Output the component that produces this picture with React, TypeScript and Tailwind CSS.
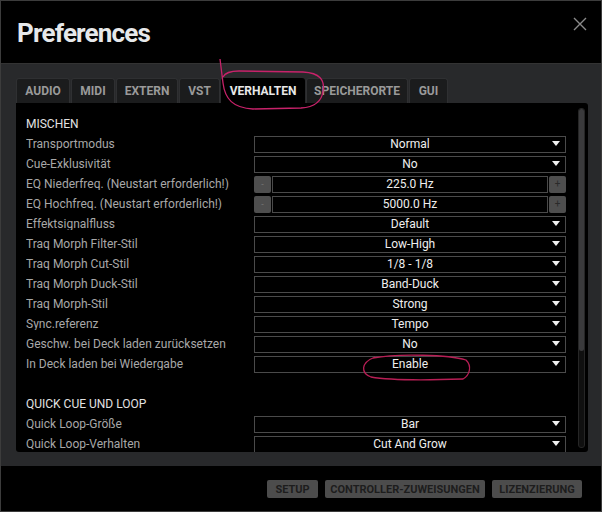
import React from "react";

const Arrow = () => (
  <svg width="8" height="5" viewBox="0 0 8 5" className="absolute right-[5px] top-[4px]">
    <polygon points="0,0 8,0 4,5" fill="#f0f0f0" />
  </svg>
);

type Row = { label: string; value: string; kind?: "select" | "stepper" };

const mischen: Row[] = [
  { label: "Transportmodus", value: "Normal" },
  { label: "Cue-Exklusivität", value: "No" },
  { label: "EQ Niederfreq. (Neustart erforderlich!)", value: "225.0 Hz", kind: "stepper" },
  { label: "EQ Hochfreq. (Neustart erforderlich!)", value: "5000.0 Hz", kind: "stepper" },
  { label: "Effektsignalfluss", value: "Default" },
  { label: "Traq Morph Filter-Stil", value: "Low-High" },
  { label: "Traq Morph Cut-Stil", value: "1/8 - 1/8" },
  { label: "Traq Morph Duck-Stil", value: "Band-Duck" },
  { label: "Traq Morph-Stil", value: "Strong" },
  { label: "Sync.referenz", value: "Tempo" },
  { label: "Geschw. bei Deck laden zurücksetzen", value: "No" },
  { label: "In Deck laden bei Wiedergabe", value: "Enable" },
];

const quick: Row[] = [
  { label: "Quick Loop-Größe", value: "Bar" },
  { label: "Quick Loop-Verhalten", value: "Cut And Grow" },
];

function SettingRow({ row }: { row: Row }) {
  return (
    <div className="flex items-center h-[20px]">
      <div className="w-[228px] text-[12px] text-[#a8a8a8] leading-none truncate">{row.label}</div>
      {row.kind === "stepper" ? (
        <div className="flex w-[312px] h-[17px] gap-px">
          <div className="w-[17px] h-full bg-[#4e4e4e] rounded-[2px] flex items-center justify-center text-[#777] text-[9px] leading-none">-</div>
          <div className="flex-1 h-full border border-[#4a4a4a] flex items-center justify-center text-[12px] text-[#eeeeee] leading-none">{row.value}</div>
          <div className="w-[17px] h-full bg-[#4e4e4e] rounded-[2px] flex items-center justify-center text-[#2a2a2a] text-[10px] leading-none">+</div>
        </div>
      ) : (
        <div className="relative w-[312px] h-[17px] border border-[#4a4a4a] flex items-center justify-center text-[12px] text-[#eeeeee] leading-none">
          {row.value}
          <Arrow />
        </div>
      )}
    </div>
  );
}

const tabs = ["AUDIO", "MIDI", "EXTERN", "VST", "VERHALTEN", "SPEICHERORTE", "GUI"];
const tabW = [54, 44, 62, 41, 84, 102, 39];

export default function App() {
  return (
    <div
      className="relative w-[602px] h-[512px] bg-black border border-[#3c3c3c] flex flex-col overflow-hidden"
      style={{ fontFamily: "Roboto, 'Liberation Sans', sans-serif" }}
    >
      {/* Header */}
      <div className="h-[62px] flex items-center justify-between pl-[16px] pr-[14px] shrink-0">
        <div className="text-[26px] font-bold text-[#e6e8ea] tracking-[-0.8px] leading-none mt-[2px]">Preferences</div>
        <svg width="14" height="14" viewBox="0 0 14 14" className="mb-[16px]">
          <path d="M1 1 L13 13 M13 1 L1 13" stroke="#8a8a8a" strokeWidth="1.4" />
        </svg>
      </div>

      {/* Middle */}
      <div className="h-[403px] bg-[#28292b] border-t border-[#333] pt-[14px] pl-[15px] pr-[13px] shrink-0 flex flex-col">
        <div className="flex h-[25px] gap-[1px]">
          {tabs.map((t, i) => (
            <div
              key={t}
              style={{ width: tabW[i] }}
              className={
                t === "VERHALTEN"
                  ? "h-full bg-black rounded-t-[3px] flex items-center justify-center text-[12px] font-bold text-[#e8e8e8] leading-none"
                  : "h-full bg-[#1b1c1d] border-t border-x border-[#2f3032] rounded-t-[3px] flex items-center justify-center text-[12px] font-bold text-[#9a9a9a] leading-none"
              }
            >
              {t}
            </div>
          ))}
        </div>
        <div className="relative h-[349px] bg-black rounded-b-[3px] rounded-tr-[3px] overflow-hidden">
          <div className="pl-[10px] pt-[11px]">
            <div className="h-[20px] flex items-center text-[12px] text-[#e2e2e2] leading-none">MISCHEN</div>
            {mischen.map((r) => (
              <SettingRow key={r.label} row={r} />
            ))}
            <div className="h-[20px]" />
            <div className="h-[20px] flex items-center text-[12px] text-[#e2e2e2] leading-none">QUICK CUE UND LOOP</div>
            {quick.map((r) => (
              <SettingRow key={r.label} row={r} />
            ))}
          </div>
          {/* scrollbar */}
          <div className="absolute right-[3px] top-[5px] bottom-[4px] w-[7px] rounded-[3px] bg-[#101010] border border-[#262626]">
            <div className="h-[242px] w-full rounded-[3px] bg-[#3a3a3c]" />
          </div>
        </div>
      </div>

      {/* Footer */}
      <div className="flex-1 flex items-start justify-end pt-[14px] pr-[19px] gap-[7px]">
        <div className="h-[18px] w-[51px] bg-[#4c4c4c] rounded-[2px] flex items-center justify-center text-[11px] font-bold text-[#1d1d1d] leading-none">SETUP</div>
        <div className="h-[18px] w-[160px] bg-[#4c4c4c] rounded-[2px] flex items-center justify-center text-[11px] font-bold text-[#1d1d1d] leading-none">CONTROLLER-ZUWEISUNGEN</div>
        <div className="h-[18px] w-[90px] bg-[#4c4c4c] rounded-[2px] flex items-center justify-center text-[11px] font-bold text-[#1d1d1d] leading-none">LIZENZIERUNG</div>
      </div>

      {/* Pink annotation strokes */}
      <svg className="absolute left-0 top-0 pointer-events-none" width="602" height="512" viewBox="0 0 602 512">
        <path
          d="M219 58 C220 66 221 74 222 82 C224 98 232 107 252 108 L300 107 C315 106 321 99 322 90 C324 79 319 72 302 71 L238 70 C228 70 224 72 222 76"
          fill="none"
          stroke="#c8226a"
          strokeWidth="1.3"
        />
        <path
          d="M372 357 C398 352 448 354 465 359 C471 365 469 374 462 378 C432 379 392 380 370 376 C360 372 359 362 374 356"
          fill="none"
          stroke="#b81e55"
          strokeWidth="1.3"
        />
      </svg>
    </div>
  );
}
